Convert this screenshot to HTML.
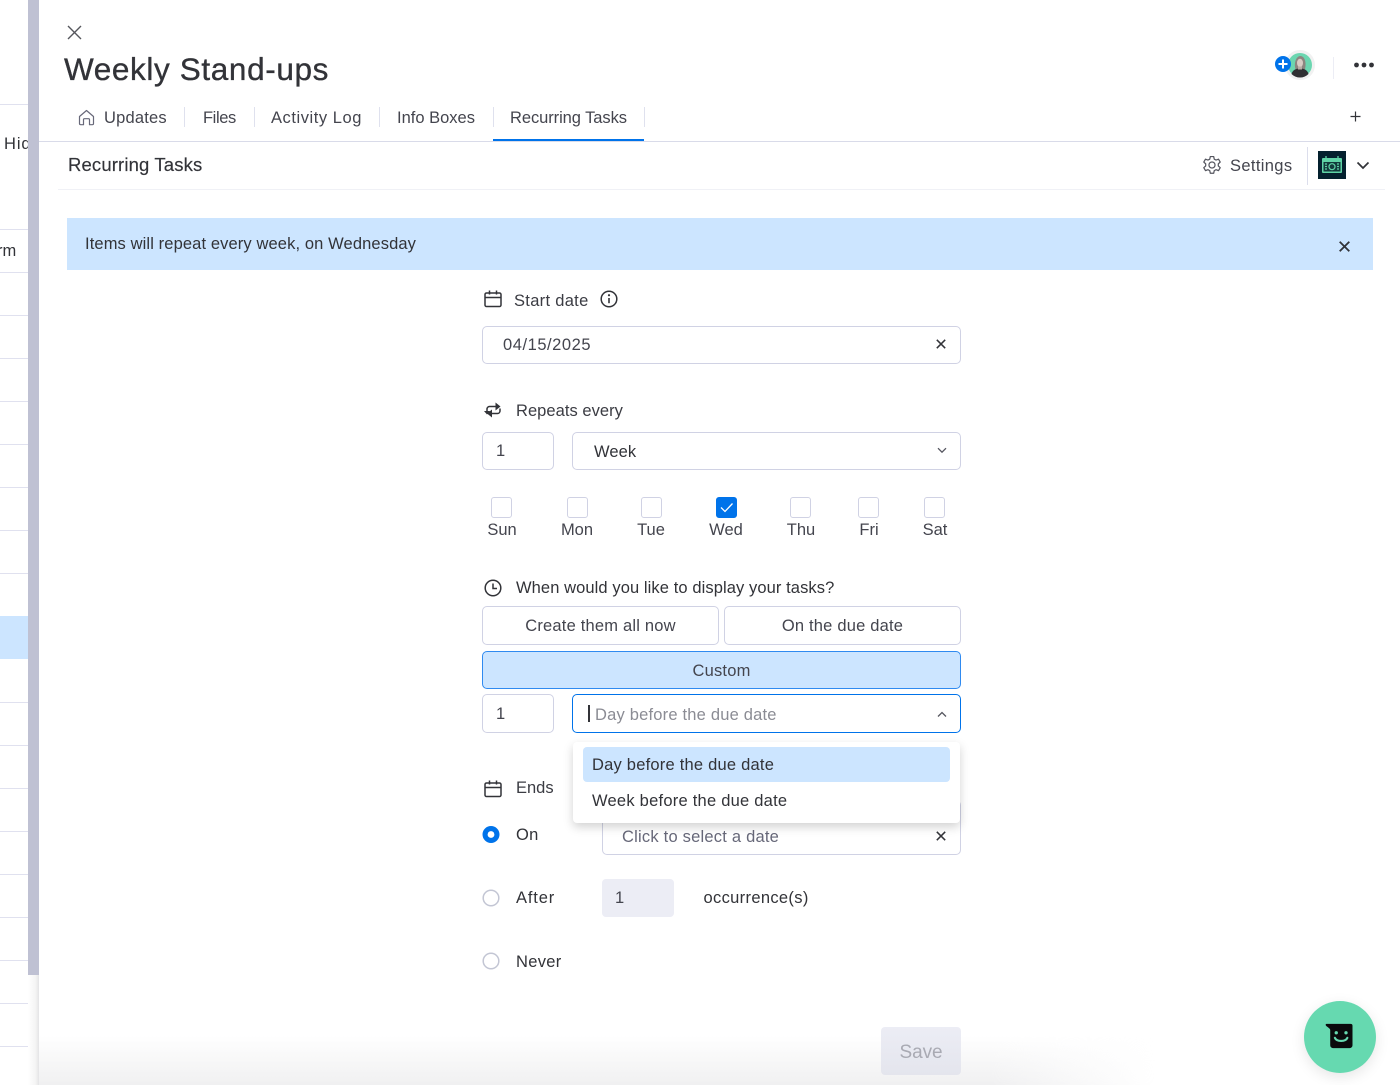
<!DOCTYPE html>
<html lang="en">
<head>
<meta charset="utf-8">
<title>Weekly Stand-ups</title>
<style>
html,body{margin:0;padding:0;width:1400px;height:1085px;overflow:hidden;background:#fff}
body{position:relative;font-family:"Liberation Sans",sans-serif;color:#323338;font-size:16.5px}
.a{position:absolute}
.t{position:absolute;white-space:nowrap;line-height:20px;height:20px}
.box{position:absolute;box-sizing:border-box;border:1px solid #d0d2e4;border-radius:5px;background:#fff}
.line{position:absolute;left:0;width:28px;height:1px;background:#e0e1ef}
.cb{position:absolute;box-sizing:border-box;top:497px;width:21px;height:21px;border:1px solid #d0d2e4;border-radius:3px;background:#fff}
.sep{position:absolute;top:107px;width:1px;height:20px;background:#dfe1ee}
.c{text-align:center}
svg{position:absolute;overflow:visible}
</style>
</head>
<body>

<!-- left background table -->
<div class="line" style="top:104px"></div>
<div class="line" style="top:229px"></div>
<div class="line" style="top:272px"></div>
<div class="line" style="top:315px"></div>
<div class="line" style="top:358px"></div>
<div class="line" style="top:401px"></div>
<div class="line" style="top:444px"></div>
<div class="line" style="top:487px"></div>
<div class="line" style="top:530px"></div>
<div class="line" style="top:573px"></div>
<div class="a" style="left:0;top:616px;width:28px;height:43px;background:#cce5ff"></div>
<div class="line" style="top:702px"></div>
<div class="line" style="top:745px"></div>
<div class="line" style="top:788px"></div>
<div class="line" style="top:831px"></div>
<div class="line" style="top:874px"></div>
<div class="line" style="top:917px"></div>
<div class="line" style="top:960px"></div>
<div class="line" style="top:1003px"></div>
<div class="line" style="top:1046px"></div>
<div class="a" style="left:0;top:0;width:28px;height:1085px;overflow:hidden">
  <div class="t" style="left:4px;top:134px;letter-spacing:.9px">Hid</div>
  <div class="t" style="left:-3px;top:241px">rm</div>
</div>
<div class="a" style="left:28px;top:0;width:11px;height:975px;background:#bfc1d3"></div>
<div class="a" style="left:28px;top:975px;width:11px;height:110px;background:linear-gradient(90deg,#fff 0,#f4f4f4 70%,#e4e4e6 100%)"></div>

<!-- bottom shade -->
<div class="a" style="left:39px;top:1035px;width:1361px;height:50px;background:linear-gradient(180deg,rgba(240,240,241,0),#f0f0f1);-webkit-mask-image:linear-gradient(90deg,#000 70%,transparent 82%);mask-image:linear-gradient(90deg,#000 70%,transparent 82%)"></div>

<!-- header -->
<svg style="left:67px;top:25px" width="15" height="15" viewBox="0 0 15 15"><path d="M1 1L14 14M14 1L1 14" stroke="#55565c" stroke-width="1.4" fill="none"/></svg>
<div class="t" style="left:64px;top:50px;height:38px;line-height:38px;font-size:31.5px;letter-spacing:.62px;color:#323338;-webkit-text-stroke:.35px #323338">Weekly Stand-ups</div>

<!-- avatar -->
<div class="a" style="left:1285px;top:50px;width:30px;height:30px;border-radius:50%;background:#f1f1f1"></div>
<svg style="left:1288px;top:53px" width="24" height="24" viewBox="0 0 24 24">
  <circle cx="12" cy="12" r="12" fill="#6bd6b0"/>
  <path d="M7.500 16c-1.500-4-.5-12 4.500-13 5-.3 6.500 7 5 13-1 1-2.500 1-5 1S8.500 17 7.500 16z" fill="#8d8580"/>
  <path d="M3.500 21c1-4 4.500-5.500 8.500-5.500s7.500 1.500 8.500 5.500a12 12 0 0 1-17 0z" fill="#2f2f32"/>
  <ellipse cx="12" cy="10" rx="3" ry="4.200" fill="#d8cbc4"/>
  <path d="M10 13.500h4v3h-4z" fill="#b9aca6"/>
</svg>
<div class="a" style="left:1275px;top:56px;width:16px;height:16px;border-radius:50%;background:#0073ea"></div>
<svg style="left:1275px;top:56px" width="16" height="16" viewBox="0 0 16 16"><path d="M8 3.500v9M3.500 8h9" stroke="#fff" stroke-width="2"/></svg>
<div class="a" style="left:1333px;top:57px;width:1px;height:22px;background:#ecedf5"></div>
<svg style="left:1353px;top:61px" width="22" height="8" viewBox="0 0 22 8"><circle cx="3.500" cy="4" r="2.400" fill="#323338"/><circle cx="11" cy="4" r="2.400" fill="#323338"/><circle cx="18.500" cy="4" r="2.400" fill="#323338"/></svg>

<!-- tabs -->
<svg style="left:78px;top:109px" width="17" height="17" viewBox="0 0 17 17"><path d="M1.500 7.500L8.500 1.500l7 6v7a1.200 1.200 0 0 1-1.200 1.200h-2.800v-5a1 1 0 0 0-1-1H6.500a1 1 0 0 0-1 1v5H2.700a1.200 1.200 0 0 1-1.200-1.200z" fill="none" stroke="#676879" stroke-width="1.200" stroke-linejoin="round"/></svg>
<div class="t" style="left:104px;top:107.500px;letter-spacing:.2px;color:#44454e">Updates</div>
<div class="sep" style="left:184px"></div>
<div class="t" style="left:203px;top:107.500px;letter-spacing:-.4px;color:#44454e">Files</div>
<div class="sep" style="left:254px"></div>
<div class="t" style="left:271px;top:107.500px;letter-spacing:.55px;color:#44454e">Activity Log</div>
<div class="sep" style="left:379px"></div>
<div class="t" style="left:397px;top:107.500px;letter-spacing:0;color:#44454e">Info Boxes</div>
<div class="sep" style="left:493px"></div>
<div class="t" style="left:510px;top:107.500px;letter-spacing:-.07px;color:#44454e">Recurring Tasks</div>
<div class="sep" style="left:644px"></div>
<svg style="left:1350px;top:111px" width="11" height="11" viewBox="0 0 11 11"><path d="M5.500 .5v10M.5 5.500h10" stroke="#323338" stroke-width="1.200"/></svg>
<div class="a" style="left:39px;top:141px;width:1361px;height:1px;background:#d9dbe9"></div>
<div class="a" style="left:493px;top:139px;width:151px;height:2px;background:#0073ea"></div>

<!-- sub header -->
<div class="t" style="left:68px;top:155px;font-size:18.500px;letter-spacing:.14px;color:#323338;-webkit-text-stroke:.15px #323338">Recurring Tasks</div>
<svg style="left:1203px;top:156px" width="18" height="18" viewBox="1 .5 16 16"><path d="M7.500 1h3l.5 2.300 1.600.8 2.200-.8 1.500 2.600-1.700 1.600v1.800l1.700 1.600-1.500 2.600-2.200-.8-1.600.8-.5 2.300h-3L7 13.500l-1.600-.8-2.200.8-1.500-2.600L3.400 9.300V7.500L1.700 5.900l1.500-2.600 2.200.8L7 3.300z" fill="none" stroke="#55565f" stroke-width="1.100" stroke-linejoin="round"/><circle cx="9" cy="8.500" r="2.700" fill="none" stroke="#55565f" stroke-width="1.100"/></svg>
<div class="t" style="left:1230px;top:156px;letter-spacing:.35px;color:#44454e">Settings</div>
<div class="a" style="left:1307px;top:147px;width:1px;height:38px;background:#dcdeec"></div>
<div class="a" style="left:1318px;top:151px;width:28px;height:28px;background:#04202e"></div>
<svg style="left:1321px;top:156px" width="22" height="18" viewBox="0 0 22 18"><rect x="1" y="2" width="20" height="15" rx="1" fill="#5fd3a6"/><rect x="2.500" y="6" width="17" height="9.500" fill="#123a3c"/><circle cx="11" cy="10.700" r="3" fill="none" stroke="#5fd3a6" stroke-width="1.200"/><path d="M4 8h2M4 10.500h2M4 13h2M16 8h2M16 10.500h2M16 13h2" stroke="#5fd3a6" stroke-width="1.200"/><path d="M5 0v3M17 0v3" stroke="#5fd3a6" stroke-width="1.300"/></svg>
<svg style="left:1356px;top:161px" width="14" height="9" viewBox="0 0 14 9"><path d="M1.500 1.500L7 7l5.500-5.500" fill="none" stroke="#323338" stroke-width="1.700"/></svg>
<div class="a" style="left:58px;top:189px;width:1327px;height:1px;background:#f0f1f6"></div>

<!-- banner -->
<div class="a" style="left:67px;top:218px;width:1306px;height:52px;background:#cce5ff"></div>
<div class="t" style="left:85px;top:234px;letter-spacing:.115px;color:#323338">Items will repeat every week, on Wednesday</div>
<svg style="left:1339px;top:240.500px" width="11" height="11" viewBox="0 0 11 11"><path d="M.7 .7l9.600 9.600M10.300 .7L.7 10.300" stroke="#323338" stroke-width="1.800"/></svg>

<!-- start date -->
<svg style="left:484px;top:289.500px" width="18" height="18" viewBox="0 0 18 18"><rect x="1" y="3" width="16" height="13.500" rx="1.500" fill="none" stroke="#323338" stroke-width="1.500"/><path d="M1 7.500h16M5.500 .5v4M12.500 .5v4" stroke="#323338" stroke-width="1.500" fill="none"/></svg>
<div class="t" style="left:514px;top:290.500px;letter-spacing:.3px;color:#3b3c43">Start date</div>
<svg style="left:600px;top:289.500px" width="18" height="18" viewBox="0 0 18 18"><circle cx="9" cy="9" r="7.800" fill="none" stroke="#323338" stroke-width="1.500"/><path d="M9 8v5.200" stroke="#323338" stroke-width="1.600"/><circle cx="9" cy="5.200" r="1.100" fill="#323338"/></svg>
<div class="box" style="left:482px;top:326px;width:479px;height:38px"></div>
<div class="t" style="left:503px;top:335px;letter-spacing:.55px;color:#44454e">04/15/2025</div>
<svg style="left:936px;top:339px" width="10" height="10" viewBox="0 0 10 10"><path d="M.8 .8l8.400 8.400M9.200 .8L.8 9.200" stroke="#323338" stroke-width="1.500"/></svg>

<!-- repeats -->
<svg style="left:484px;top:402px" width="19" height="16" viewBox="0 0 19 16"><path d="M3 10V7a2.500 2.500 0 0 1 2.500-2.500h8" fill="none" stroke="#323338" stroke-width="1.500"/><path d="M11.500 .5l5 4-5 4z" fill="#323338"/><path d="M16 6.500V9a2.500 2.500 0 0 1-2.500 2.500h-7" fill="none" stroke="#323338" stroke-width="1.500"/><path d="M8 7.500l-5 4 5 4z" fill="#323338"/><path d="M0 9h6l-3 3.500z" fill="#323338"/></svg>
<div class="t" style="left:516px;top:400.500px;letter-spacing:.04px;color:#3b3c43">Repeats every</div>
<div class="box" style="left:482px;top:432px;width:72px;height:38px"></div>
<div class="t" style="left:496px;top:441px;color:#44454e">1</div>
<div class="box" style="left:572px;top:432px;width:389px;height:38px"></div>
<div class="t" style="left:594px;top:442px;letter-spacing:.1px;color:#323338">Week</div>
<svg style="left:937px;top:447px" width="10" height="7" viewBox="0 0 10 7"><path d="M1 1.200l4 4 4-4" fill="none" stroke="#55565f" stroke-width="1.300"/></svg>

<!-- days -->
<div class="cb" style="left:491px"></div>
<div class="cb" style="left:567px"></div>
<div class="cb" style="left:641px"></div>
<div class="cb" style="left:716px;background:#0073ea;border-color:#0073ea"></div>
<svg style="left:716px;top:497px" width="21" height="21" viewBox="0 0 21 21"><path d="M5 10.500l4 4 7.500-8" fill="none" stroke="#fff" stroke-width="1.300"/></svg>
<div class="cb" style="left:790px"></div>
<div class="cb" style="left:858px"></div>
<div class="cb" style="left:924px"></div>
<div class="t c" style="left:472px;top:520px;width:60px;color:#44454e">Sun</div>
<div class="t c" style="left:547px;top:520px;width:60px;color:#44454e">Mon</div>
<div class="t c" style="left:621px;top:520px;width:60px;color:#44454e">Tue</div>
<div class="t c" style="left:696px;top:520px;width:60px;color:#44454e">Wed</div>
<div class="t c" style="left:771px;top:520px;width:60px;color:#44454e">Thu</div>
<div class="t c" style="left:839px;top:520px;width:60px;color:#44454e">Fri</div>
<div class="t c" style="left:905px;top:520px;width:60px;color:#44454e">Sat</div>

<!-- when -->
<svg style="left:484px;top:578.500px" width="18" height="18" viewBox="0 0 18 18"><circle cx="9" cy="9" r="7.800" fill="none" stroke="#323338" stroke-width="1.500"/><path d="M9 4.500V9.500h4" fill="none" stroke="#323338" stroke-width="1.500"/></svg>
<div class="t" style="left:516px;top:578px;letter-spacing:.09px;color:#323338">When would you like to display your tasks?</div>
<div class="box c" style="left:482px;top:606px;width:237px;height:39px;line-height:38px;letter-spacing:.2px;color:#44454e">Create them all now</div>
<div class="box c" style="left:724px;top:606px;width:237px;height:39px;line-height:38px;letter-spacing:.2px;color:#44454e">On the due date</div>
<div class="box c" style="left:482px;top:651px;width:479px;height:38px;line-height:38px;background:#cce5ff;border-color:#2f8af0;letter-spacing:.2px;color:#44454e">Custom</div>
<div class="box" style="left:482px;top:694px;width:72px;height:39px"></div>
<div class="t" style="left:496px;top:704px;color:#44454e">1</div>
<div class="box" style="left:572px;top:694px;width:389px;height:39px;border-color:#0073ea"></div>
<div class="a" style="left:588px;top:705px;width:1.500px;height:17px;background:#323338"></div>
<div class="t" style="left:595px;top:705px;letter-spacing:.2px;color:#8b8c94">Day before the due date</div>
<svg style="left:937px;top:711px" width="10" height="7" viewBox="0 0 10 7"><path d="M1 5.500l4-4 4 4" fill="none" stroke="#55565f" stroke-width="1.300"/></svg>

<!-- ends -->
<svg style="left:484px;top:780px" width="18" height="18" viewBox="0 0 18 18"><rect x="1" y="3" width="16" height="13.500" rx="1.500" fill="none" stroke="#323338" stroke-width="1.500"/><path d="M1 7.500h16M5.500 .5v4M12.500 .5v4" stroke="#323338" stroke-width="1.500" fill="none"/></svg>
<div class="t" style="left:516px;top:778px;letter-spacing:0;color:#3b3c43">Ends</div>

<svg style="left:482px;top:826px" width="18" height="18" viewBox="0 0 18 18"><circle cx="9" cy="8.500" r="8.500" fill="#0073ea"/><circle cx="9" cy="8.500" r="3.400" fill="#fff"/></svg>
<div class="t" style="left:516px;top:825px;letter-spacing:.3px;color:#323338">On</div>
<div class="box" style="left:602px;top:800px;width:359px;height:55px"></div>
<div class="t" style="left:622px;top:827px;letter-spacing:.22px;color:#676879">Click to select a date</div>
<svg style="left:936px;top:831px" width="10" height="10" viewBox="0 0 10 10"><path d="M.8 .8l8.400 8.400M9.200 .8L.8 9.200" stroke="#323338" stroke-width="1.500"/></svg>

<svg style="left:482px;top:889px" width="18" height="18" viewBox="0 0 18 18"><circle cx="9" cy="9" r="7.800" fill="#fff" stroke="#c3c6d4" stroke-width="1.500"/></svg>
<div class="t" style="left:516px;top:888px;letter-spacing:.85px;color:#323338">After</div>
<div class="a" style="left:602px;top:879px;width:72px;height:38px;border-radius:4px;background:#ecedf5"></div>
<div class="t" style="left:615px;top:888px;color:#44454e">1</div>
<div class="t" style="left:703.500px;top:888px;letter-spacing:.33px;color:#323338">occurrence(s)</div>

<svg style="left:482px;top:952px" width="18" height="18" viewBox="0 0 18 18"><circle cx="9" cy="9" r="7.800" fill="#fff" stroke="#c3c6d4" stroke-width="1.500"/></svg>
<div class="t" style="left:516px;top:951.500px;letter-spacing:.3px;color:#323338">Never</div>

<!-- dropdown -->
<div class="a" style="left:573px;top:742px;width:387px;height:81px;background:#fff;border-radius:4px;box-shadow:0 4px 10px rgba(0,0,0,.18)"></div>
<div class="a" style="left:583px;top:747px;width:367px;height:35px;background:#cce5ff;border-radius:4px"></div>
<div class="t" style="left:592px;top:755px;letter-spacing:.22px;color:#323338">Day before the due date</div>
<div class="t" style="left:592px;top:791px;letter-spacing:.24px;color:#323338">Week before the due date</div>

<!-- save -->
<div class="a" style="left:881px;top:1027px;width:80px;height:48px;border-radius:4px;background:linear-gradient(180deg,#ecedf5,#e4e5ed);text-align:center;line-height:51px;font-size:19px;letter-spacing:-.1px;color:#a9aab3">Save</div>

<!-- chat -->
<div class="a" style="left:1304px;top:1001px;width:72px;height:72px;border-radius:50%;background:#66d9b0;box-shadow:0 4px 14px rgba(0,0,0,.1)"></div>
<svg style="left:1325px;top:1023px" width="29" height="26" viewBox="0 0 30 28"><path d="M1 1h26a2 2 0 0 1 2 2v21a3 3 0 0 1-3 3H8a3 3 0 0 1-3-3V7.500C5 5.500 .5 4 .1 2.200 0 1.500 .4 1 1 1z" fill="#0a0a0c"/><circle cx="11.500" cy="10.500" r="1.800" fill="#66d9b0"/><circle cx="22" cy="10.500" r="1.800" fill="#66d9b0"/><path d="M10 16c2 4.500 11.500 4.500 13.500 0" fill="none" stroke="#66d9b0" stroke-width="2.300" stroke-linecap="round"/></svg>

</body>
</html>
